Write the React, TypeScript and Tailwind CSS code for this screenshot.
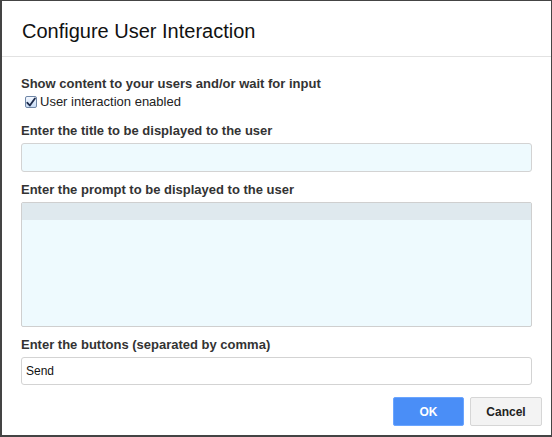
import React from "react";

export default function App() {
  return (
    <div className="w-[552px] h-[437px] bg-white border-l-2 border-t border-r border-b-2 border-[#444] flex flex-col font-['Liberation_Sans',Arial,sans-serif]">
      {/* header */}
      <div className="h-[56px] border-b border-[#e2e2e2] pl-[20px] pt-[18px] shrink-0">
        <h1 className="text-[20px] leading-[24px] text-[#111]">
          Configure User Interaction
        </h1>
      </div>

      {/* body */}
      <div className="flex flex-col px-[19px] pt-[19px] text-[#333]">
        <label className="text-[13px] leading-[16px] font-bold">
          Show content to your users and/or wait for input
        </label>
        <div className="mt-[1px] flex items-center h-[18px] pl-[4px]">
          <span className="w-[12px] h-[12px] rounded-[2px] border border-[#6f86a6] bg-gradient-to-b from-[#f4f8ff] to-[#c8dcf5] flex items-center justify-center mr-[3px]">
            <svg width="11" height="11" viewBox="0 0 11 11">
              <path
                d="M1.5 5.8 L4.2 8.8 L9.8 1"
                fill="none"
                stroke="#1c2a4a"
                strokeWidth="2"
                strokeLinecap="round"
                strokeLinejoin="round"
              />
            </svg>
          </span>
          <span className="text-[13px] leading-[18px] text-[#222]">
            User interaction enabled
          </span>
        </div>

        <label className="mt-[12px] text-[13px] leading-[16px] font-bold">
          Enter the title to be displayed to the user
        </label>
        <div className="mt-[4px] h-[29px] rounded-[3px] border border-[#d3d3d3] bg-[#eefafe]" />

        <label className="mt-[10px] text-[13px] leading-[16px] font-bold">
          Enter the prompt to be displayed to the user
        </label>
        <div className="mt-[4px] h-[125px] rounded-[2px] border border-[#cfcfcf] bg-[#eefafe] flex flex-col overflow-hidden">
          <div className="h-[17px] bg-[#dfe9ee]" />
        </div>

        <label className="mt-[10px] text-[13px] leading-[16px] font-bold">
          Enter the buttons (separated by comma)
        </label>
        <div className="mt-[4px] h-[28px] rounded-[3px] border border-[#d3d3d3] bg-white flex items-center px-[4px]">
          <span className="text-[12px] text-[#111]">Send</span>
        </div>

        <div className="mt-[12px] flex justify-end gap-[6px] mr-[-10px]">
          <button className="w-[71px] h-[29px] rounded-[2px] border border-[#6aa5ff] bg-[#4a8ef7] text-white text-[12px] font-bold">
            OK
          </button>
          <button className="w-[72px] h-[29px] rounded-[2px] border border-[#d6d6d6] bg-[#f3f3f3] text-[#222] text-[12px] font-bold">
            Cancel
          </button>
        </div>
      </div>
    </div>
  );
}
